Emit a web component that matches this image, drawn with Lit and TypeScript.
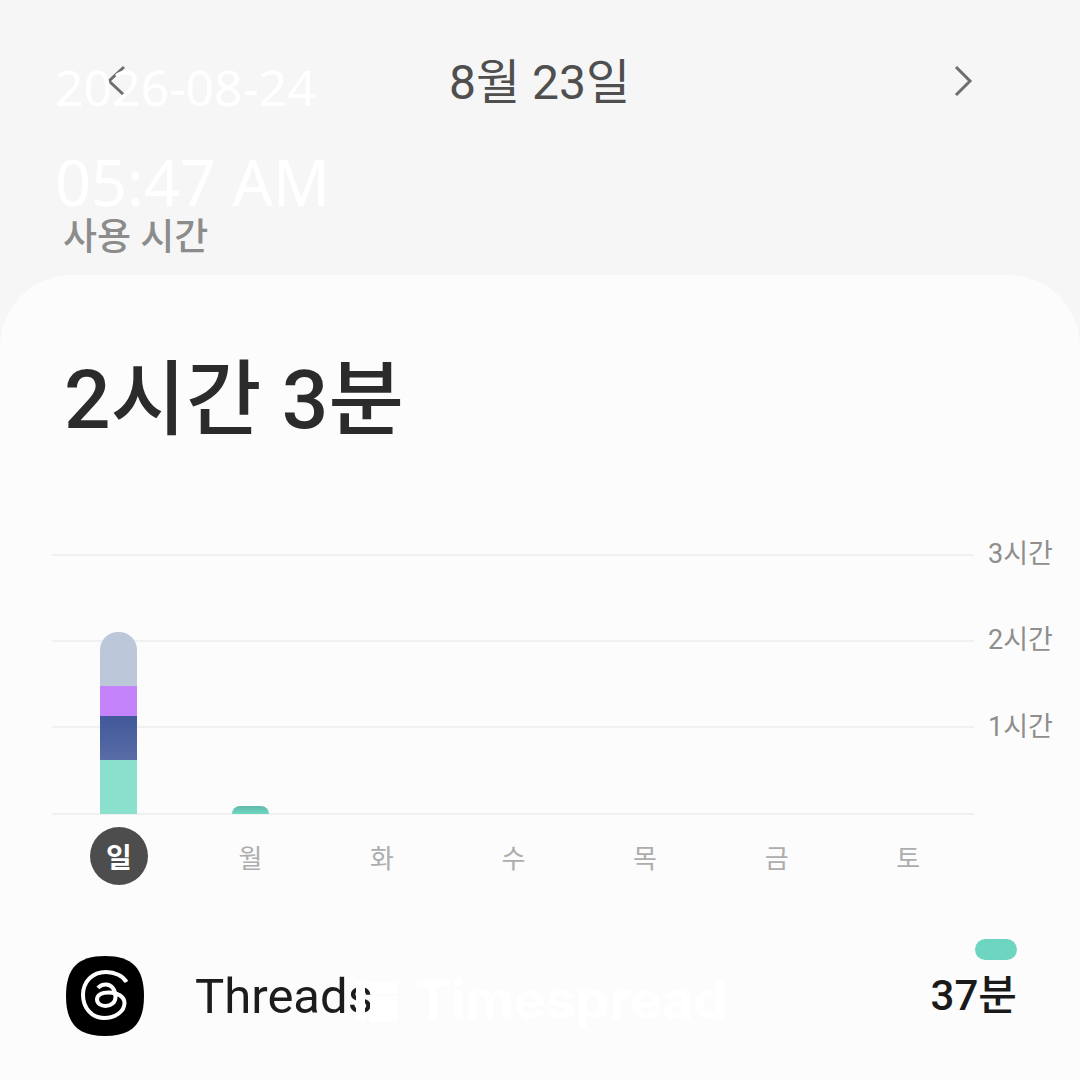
import { LitElement, css, html, svg } from 'lit';
import { customElement } from 'lit/decorators.js';

const DAYS = ['일', '월', '화', '수', '목', '금', '토'];
const AXIS = ['3시간', '2시간', '1시간'];

type Segment = { h: number; cls: string };

const BARS: Segment[][] = [
  [
    { h: 54, cls: 'slate' },
    { h: 30, cls: 'purple' },
    { h: 44, cls: 'navy' },
    { h: 54, cls: 'teal' },
  ],
  [{ h: 8, cls: 'teal2' }],
  [],
  [],
  [],
  [],
  [],
];

const chevron = (d: string) => svg`
  <svg class="chev" width="24" height="36" viewBox="0 0 24 36" fill="none" stroke="#6e6e6e" stroke-width="3">
    <path d=${d} />
  </svg>
`;

@customElement('app-root')
export class AppRoot extends LitElement {
  static override styles = css`
    :host {
      display: block;
      width: 1080px;
      height: 1080px;
      overflow: hidden;
      position: relative;
      background: #f6f6f6;
      font-family: Roboto, 'Noto Sans CJK KR', sans-serif;
    }
    .top {
      height: 275px;
      box-sizing: border-box;
      padding: 56px 0 0 63px;
      display: flex;
      flex-direction: column;
    }
    .nav {
      display: flex;
      align-items: center;
      justify-content: space-between;
      height: 50px;
      padding: 0 104px 0 40px;
    }
    .nav-title {
      font-size: 48px;
      color: #4f4f4f;
      line-height: 50px;
      padding-top: 4px;
    }
    .chev {
      display: block;
    }
    .label {
      margin-top: 107px;
      font-size: 37px;
      line-height: 50px;
      font-weight: 500;
      color: #8c8c8c;
    }
    .card {
      height: 805px;
      box-sizing: border-box;
      background: #fcfcfc;
      border-radius: 72px 72px 0 0;
      padding: 75px 0 0 52px;
    }
    .total {
      margin-left: 12px;
      font-size: 82px;
      line-height: 100px;
      font-weight: 500;
      color: #2b2b2b;
    }
    .chart {
      margin-top: 104px;
      width: 1028px;
      display: grid;
      grid-template-columns: 922px 106px;
      grid-template-rows: 261px 83px;
    }
    .grid {
      grid-area: 1 / 1;
      display: flex;
      flex-direction: column;
      border-bottom: 2px solid #f0f0f0;
      box-sizing: border-box;
    }
    .grid div {
      flex: none;
      height: 84px;
      border-top: 2px solid #f0f0f0;
    }
    .bars {
      grid-area: 1 / 1;
      display: grid;
      grid-template-columns: repeat(7, 1fr);
      align-items: end;
      justify-items: center;
      padding: 0 0 1px 1px;
    }
    .bar {
      width: 37px;
      display: flex;
      flex-direction: column;
      border-radius: 18px 18px 0 0;
      overflow: hidden;
    }
    .slate { background: #bcc7d9; }
    .purple { background: #c583fb; }
    .navy { background: linear-gradient(#41589a, #586da6); }
    .teal { background: #8ae0cd; }
    .teal2 { background: linear-gradient(#62b8ac, #6dd8c1); }
    .axis {
      grid-area: 1 / 2;
      display: flex;
      flex-direction: column;
      padding-left: 14px;
    }
    .axis span {
      height: 86.3px;
      margin-top: -21px;
      margin-bottom: 21px;
      line-height: 42px;
      font-size: 27px;
      color: #8e8e8e;
    }
    .days {
      grid-area: 2 / 1;
      display: grid;
      grid-template-columns: repeat(7, 1fr);
      justify-items: center;
      padding: 12px 0 0 1px;
    }
    .day {
      width: 58px;
      height: 58px;
      border-radius: 50%;
      display: flex;
      align-items: center;
      justify-content: center;
      font-size: 26px;
      color: #adadad;
    }
    .day.active {
      background: #4d4d4d;
      color: #fff;
      font-weight: 700;
      font-size: 28px;
    }
    .row {
      margin-top: 41px;
      margin-left: 14px;
      width: 951px;
      display: flex;
      align-items: flex-start;
    }
    .app-icon {
      display: block;
      flex: none;
      margin-top: 17px;
    }
    .name {
      margin: 18px 0 0 51px;
      flex: 1;
      font-size: 49px;
      line-height: 80px;
      color: #1c1c1c;
    }
    .usage {
      display: flex;
      flex-direction: column;
      align-items: flex-end;
    }
    .pill {
      width: 42px;
      height: 21px;
      border-radius: 11px;
      background: #6dd5c0;
    }
    .mins {
      margin-top: 8px;
      font-size: 42px;
      line-height: 56px;
      font-weight: 500;
      color: #1a1a1a;
    }
    /* capture watermark lying over the page */
    .stamp {
      position: absolute;
      left: 55px;
      color: #fff;
      white-space: nowrap;
      font-family: 'Noto Sans', sans-serif;
      font-weight: 400;
    }
    .stamp.date {
      top: 60px;
      font-size: 50px;
      line-height: 55px;
    }
    .stamp.time {
      top: 144px;
      font-size: 63px;
      line-height: 75px;
    }
    .mark {
      position: absolute;
      left: 356px;
      top: 982px;
      display: block;
    }
    .brand {
      position: absolute;
      left: 415px;
      top: 970px;
      font-family: Inter, sans-serif;
      font-size: 53.5px;
      line-height: 60px;
      font-weight: 700;
      color: #fff;
    }
  `;

  override render() {
    return html`
      <div class="top">
        <div class="nav">
          ${chevron('M21 4 L6 18 L21 32')}
          <span class="nav-title">8월 23일</span>
          ${chevron('M4 4 L18 18 L4 32')}
        </div>
        <div class="label">사용 시간</div>
      </div>
      <div class="card">
        <div class="total">2시간 3분</div>
        <div class="chart">
          <div class="grid"><div></div><div></div><div></div></div>
          <div class="bars">
            ${BARS.map(
              (segs) => html`
                <div class="bar">
                  ${segs.map((s) => html`<div class=${s.cls} style="height:${s.h}px"></div>`)}
                </div>
              `,
            )}
          </div>
          <div class="axis">${AXIS.map((a) => html`<span>${a}</span>`)}</div>
          <div class="days">
            ${DAYS.map((d, i) => html`<div class="day ${i === 0 ? 'active' : ''}">${d}</div>`)}
          </div>
        </div>
        <div class="row">
          <svg class="app-icon" width="78" height="80" viewBox="0 0 78 80">
            <path d="M39 0 C66 0 78 12 78 40 C78 68 66 80 39 80 C12 80 0 68 0 40 C0 12 12 0 39 0 Z" fill="#000" />
            <path
              d="M60.5 26 C57 20 49 16 40 16 C26 16 17 26 17 39 C17 52 26 62 38 62 C50 62 58.5 55 58.5 47 C58.5 41 52 36.5 43 36.5 C35 36.5 31 39.5 31 43.5 C31 47.5 35 50 39.5 50 C45 50 49.5 46.5 49.5 41 C49.5 33 45 28.5 40 28.5 C37 28.5 34 29.5 32 32"
              fill="none"
              stroke="#fff"
              stroke-width="4"
            />
          </svg>
          <div class="name">Threads</div>
          <div class="usage">
            <div class="pill"></div>
            <div class="mins">37분</div>
          </div>
        </div>
      </div>
      <div class="stamp date">2026-08-24</div>
      <div class="stamp time">05:47 AM</div>
      <svg class="mark" width="41" height="40" viewBox="0 0 41 40" fill="#fff">
        <rect x="0" y="0" width="9" height="40" />
        <rect x="14" y="0" width="27" height="12" />
        <rect x="14" y="14" width="27" height="26" />
      </svg>
      <div class="brand">Timespread</div>
    `;
  }
}

declare global {
  interface HTMLElementTagNameMap {
    'app-root': AppRoot;
  }
}
